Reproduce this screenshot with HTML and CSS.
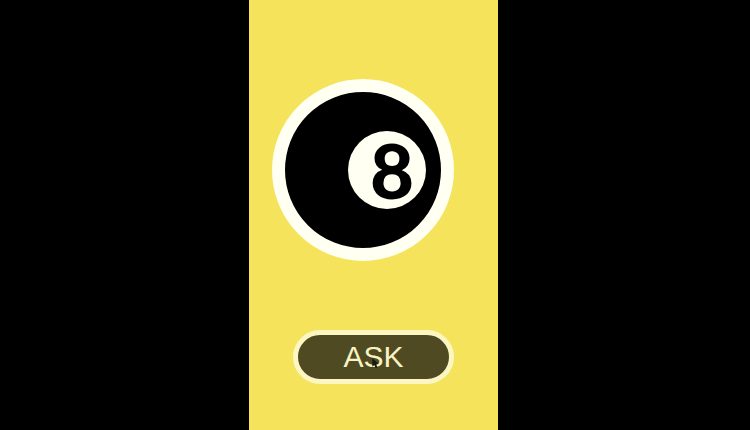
FILE: index.html
```html
<!DOCTYPE html>
<html lang="en">
<head>
    <meta charset="UTF-8">
    <title>Magic 8 Ball</title>
    <link rel="stylesheet" href="styles.css">
</head>
<body>
    <div class="container">
        <div class="ball">
            <div class="ball-window">
                <span>8</span>
            </div>
        </div>
        <button type="button" class="ask-btn">
            ASK
            <svg class="cursor" width="9" height="12" viewBox="0 0 9 13">
                <path d="M1 1 L1 10.5 L3.2 8.6 L4.6 12 L6.6 11.2 L5.2 7.9 L8 7.7 Z" fill="#1a1a10"/>
            </svg>
        </button>
    </div>
</body>
</html>
```

FILE: styles.css
```css
* {
    margin: 0;
    padding: 0;
    box-sizing: border-box;
    font-family: 'Liberation Sans', Arial, sans-serif;
}

body {
    background-color: black;
    display: flex;
    justify-content: center;
    height: 100vh;
    overflow: hidden;
}

.container {
    width: 249px;
    height: 430px;
    margin-left: -3px;
    padding-top: 79px;
    background-color: #f5e35b;
    display: flex;
    flex-direction: column;
    align-items: center;
}

.ball {
    width: 182px;
    height: 182px;
    margin-right: 21px;
    padding-left: 63px;
    border: 13px solid #fffff2;
    border-radius: 50%;
    background-color: black;
    display: flex;
    align-items: center;
}

.ball-window {
    width: 78px;
    height: 78px;
    padding-left: 10px;
    border-radius: 50%;
    background-color: #fffff2;
    display: flex;
    justify-content: center;
    align-items: center;
}

.ball-window span {
    font-family: Lato, sans-serif;
    font-size: 76px;
    font-weight: 900;
    color: black;
    line-height: 1;
}

.ask-btn {
    position: relative;
    width: 161px;
    height: 54px;
    margin-top: 69px;
    border: 5px solid #fcf7c2;
    border-radius: 27px;
    background-color: #4f4a21;
    color: #f8f3c4;
    font-size: 30px;
}

.cursor {
    position: absolute;
    left: 73px;
    top: 22px;
}
```
